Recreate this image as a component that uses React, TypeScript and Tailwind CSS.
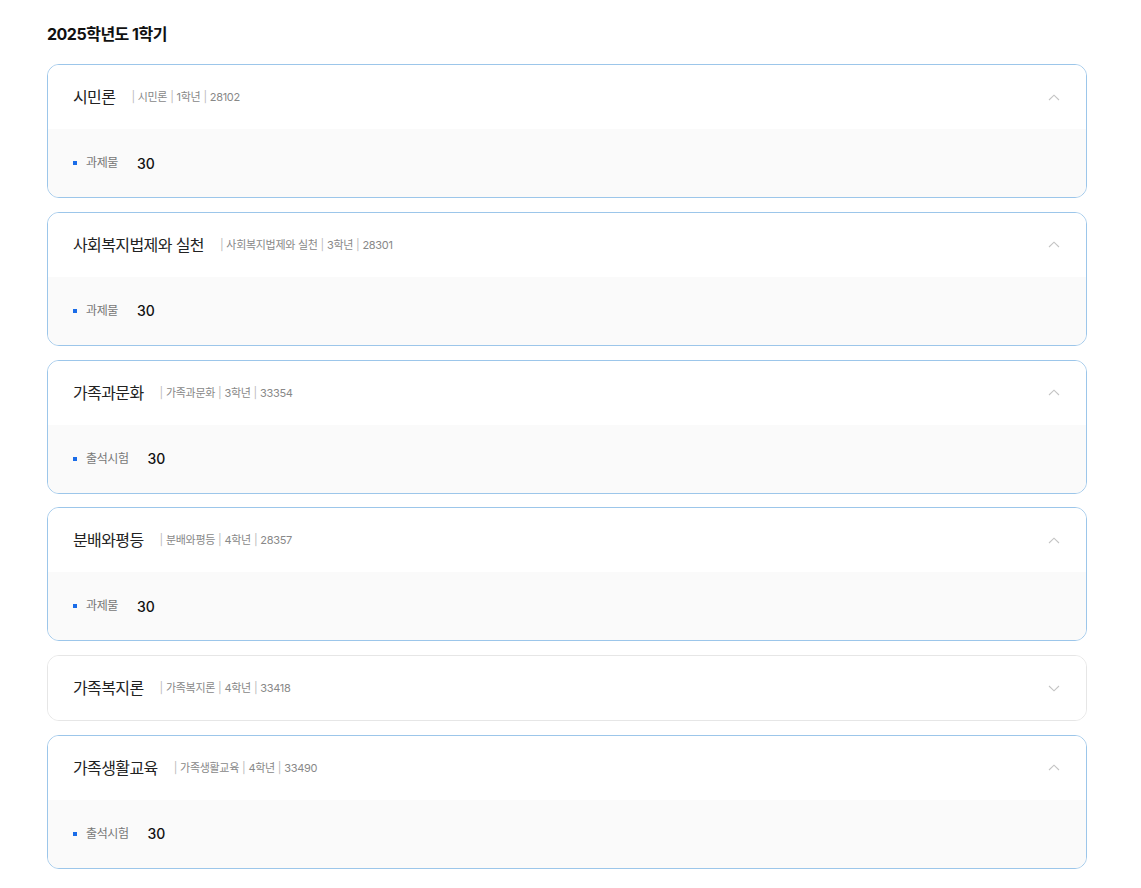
import React from "react";

type Item = { title: string; meta: string[]; open: boolean; label?: string; value?: string };

const items: Item[] = [
  { title: "시민론", meta: ["시민론", "1학년", "28102"], open: true, label: "과제물", value: "30" },
  { title: "사회복지법제와 실천", meta: ["사회복지법제와 실천", "3학년", "28301"], open: true, label: "과제물", value: "30" },
  { title: "가족과문화", meta: ["가족과문화", "3학년", "33354"], open: true, label: "출석시험", value: "30" },
  { title: "분배와평등", meta: ["분배와평등", "4학년", "28357"], open: true, label: "과제물", value: "30" },
  { title: "가족복지론", meta: ["가족복지론", "4학년", "33418"], open: false },
  { title: "가족생활교육", meta: ["가족생활교육", "4학년", "33490"], open: true, label: "출석시험", value: "30" },
];

function Chevron({ up }: { up: boolean }) {
  return (
    <svg width="12" height="7" viewBox="0 0 12 7" fill="none" className="text-[#c4c4c4]">
      {up ? (
        <path d="M1 6L6 1.2L11 6" stroke="currentColor" strokeWidth="1.1" />
      ) : (
        <path d="M1 1L6 5.8L11 1" stroke="currentColor" strokeWidth="1.1" />
      )}
    </svg>
  );
}

export default function App() {
  return (
    <div
      className="min-h-[888px] bg-white pl-[47px] pt-[24px] text-[#222]"
      style={{ fontFamily: 'Inter, "Noto Sans CJK KR", "Noto Sans", sans-serif' }}
    >
      <h1 className="text-[16px] font-bold leading-[20px] tracking-[-0.5px] text-[#111]">2025학년도 1학기</h1>
      <div className="mt-[20px] flex w-[1040px] flex-col gap-[13.75px]">
        {items.map((it, i) => (
          <div
            key={i}
            className={`overflow-hidden rounded-[12px] border ${it.open ? "border-[#9cc6ea]" : "border-[#e6e6e6]"}`}
          >
            <div className="flex h-[64px] items-center justify-between bg-white pl-[25px] pr-[26px]">
              <div className="flex items-center">
                <span className="text-[16px] leading-[20px] tracking-[-0.6px] text-[#222]">{it.title}</span>
                <span className="ml-[16px] text-[11px] leading-[14px] tracking-[-0.3px] text-[#888]">
                  {it.meta.map((m, j) => (
                    <React.Fragment key={j}>
                      <span className="text-[#bbb]">|</span>
                      <span className="ml-[3px] mr-[3px]">{m}</span>
                    </React.Fragment>
                  ))}
                </span>
              </div>
              <Chevron up={it.open} />
            </div>
            {it.open && (
              <div className="flex h-[68px] items-center bg-[#fafafa] pl-[25px]">
                <span className="h-[4px] w-[4px] bg-[#1a6ce8]" />
                <span className="ml-[9px] text-[12px] tracking-[-0.4px] text-[#777]">{it.label}</span>
                <span className="ml-[19px] text-[14px] font-medium text-[#111]">{it.value}</span>
              </div>
            )}
          </div>
        ))}
      </div>
    </div>
  );
}
